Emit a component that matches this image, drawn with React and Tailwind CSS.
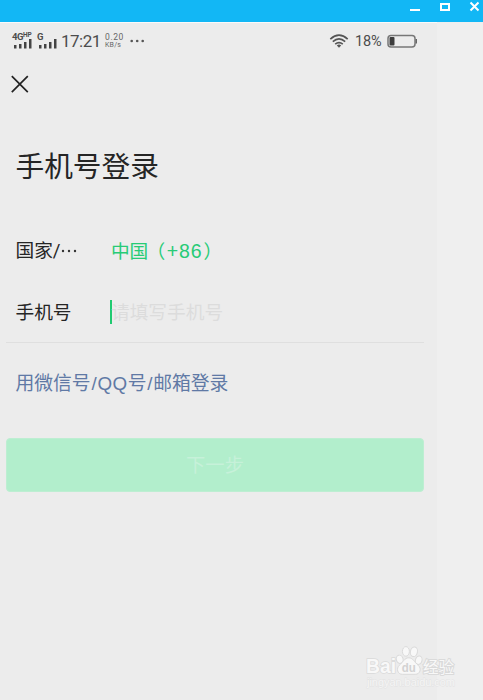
import React from "react";

function TitleBar() {
  return (
    <header className="h-[22px] shrink-0 bg-[#12b7f5] flex justify-end">
      <svg width="83" height="22" viewBox="400 0 83 22" fill="none" stroke="#fff">
        <path d="M410 10H420" strokeWidth="2" />
        <rect x="441" y="4" width="8" height="6" strokeWidth="2" />
        <path d="M470.5 2.5L478.5 10.5M478.5 2.5L470.5 10.5" strokeWidth="2" />
      </svg>
    </header>
  );
}

function Signal({ label, sup, className }) {
  return (
    <div className={`flex flex-col ${className}`}>
      <div className="flex h-[7px] items-start text-[9.5px] font-bold leading-[8px] tracking-[-0.5px] whitespace-nowrap">
        <span>{label}</span>
        {sup && <span className="text-[6.5px] leading-[5px] tracking-[-0.1px]">{sup}</span>}
      </div>
      <svg width="20" height="10" viewBox="0 0 20 10" fill="#444" className="-mt-px">
        <rect x="2" y="6" width="2.5" height="3.5" />
        <rect x="7" y="5" width="2.5" height="4.5" />
        <rect x="12" y="3" width="2.5" height="6.5" />
        <rect x="17" y="0" width="2.5" height="9.5" />
      </svg>
    </div>
  );
}

function StatusBar() {
  return (
    <div className="flex h-[36px] shrink-0 items-center pl-[12px] pr-[20px] text-[#4c4c4c]">
      <Signal label="4G" sup="HP" className="w-[25px]" />
      <Signal label="G" className="w-[24px]" />
      <span className="w-[44px] text-[17px] leading-[20px] tracking-[-0.5px]">17:21</span>
      <span className="flex w-[23px] flex-col text-[8.5px] text-[#666]">
        <span className="leading-[8px] tracking-[0.6px]">0.20</span>
        <span className="text-[7px] leading-[8px] tracking-[0.2px]">KB/s</span>
      </span>
      <svg width="17" height="6" viewBox="0 0 17 6" fill="#555" className="ml-px">
        <circle cx="2.7" cy="3" r="1.3" />
        <circle cx="8.2" cy="3" r="1.3" />
        <circle cx="13.7" cy="3" r="1.3" />
      </svg>
      <svg width="20" height="16" viewBox="329 32 20 16" fill="none" stroke="#555" strokeWidth="1.6" className="ml-auto">
        <path d="M330.3 38.1Q339 30.3 347.7 38.1M332.8 40.7Q339 35 345.2 40.7M335.2 43.2Q339 39.9 342.8 43.2" />
        <path d="M336.8 44.4Q339 42.7 341.2 44.4L339 46.7Z" fill="#555" stroke="none" />
      </svg>
      <span className="ml-[6px] w-[32px] pt-px text-[14.5px] leading-[20px] tracking-[-0.1px]">18%</span>
      <svg width="30" height="14" viewBox="387 33 30 14" fill="none" className="shrink-0">
        <rect x="388" y="34.5" width="27" height="11.5" rx="3" stroke="#777" strokeWidth="1.5" />
        <rect x="389.5" y="36" width="5" height="8.5" rx="1" fill="#3c3c3c" />
        <path d="M416.3 38V42.5" stroke="#666" strokeWidth="1.5" />
      </svg>
    </div>
  );
}

function Watermark() {
  return (
    <svg className="absolute left-[360px] top-[642px]" width="110" height="50" viewBox="360 642 110 50" fontFamily="'Liberation Sans','Noto Sans CJK SC',sans-serif">
      <g fill="#f8f8f8" stroke="#dadada" strokeWidth="1">
        <ellipse cx="399.7" cy="659.3" rx="3.4" ry="4.2" transform="rotate(-15 399.7 659.3)" />
        <ellipse cx="405.9" cy="651.4" rx="3.5" ry="4.8" />
        <ellipse cx="413.9" cy="651.8" rx="3.5" ry="4.8" transform="rotate(12 413.9 651.8)" />
        <ellipse cx="418.7" cy="660.2" rx="3.3" ry="4.3" transform="rotate(15 418.7 660.2)" />
        <path d="M408.8 657.8C413 657.8 414.2 662 418.2 665.3C422 668.4 420 674.5 415.3 674.3H402.5C397.4 674.5 396 668.4 399.3 665.3C403.3 662 404.4 657.8 408.8 657.8Z" />
        <text x="366" y="673" fontSize="19.5" textLength="30" lengthAdjust="spacingAndGlyphs" fontWeight="700" paintOrder="stroke" strokeWidth="1.5">Bai</text>
        <text x="423" y="672.5" fontSize="15.5" fontWeight="400" textLength="31" paintOrder="stroke" strokeWidth="2">经验</text>
      </g>
      <text x="401.8" y="672" fontSize="12.5" fontWeight="700" fill="#d2d2d2" textLength="14" lengthAdjust="spacingAndGlyphs">du</text>
      <text x="367" y="685.5" fontSize="11" fill="#f5f5f5" stroke="#e2e2e2" strokeWidth=".8" paintOrder="stroke" textLength="88">jingyan.baidu.com</text>
    </svg>
  );
}

export default function App() {
  return (
    <div className="relative flex h-[700px] w-[483px] flex-col overflow-hidden bg-[#efefef] font-['Liberation_Sans','Noto_Sans_CJK_SC',sans-serif]">
      <TitleBar />
      <main className="flex w-[437px] flex-1 flex-col border-t border-[#fafafa] bg-[#ececec] font-['Roboto','Noto_Sans_CJK_SC',sans-serif] text-[#252525]">
        <StatusBar />
        <button aria-label="关闭" className="ml-[11px] mt-[16px] h-[18px] w-[18px]">
          <svg width="18" height="18" viewBox="0 0 18 18" fill="none" stroke="#222" strokeWidth="1.7">
            <path d="M.8 1.2L16.8 17.2M16.8 1.2L.8 17.2" />
          </svg>
        </button>
        <h1 className="ml-[15.5px] mt-[54px] h-[40px] text-[28.7px] leading-[40px]">手机号登录</h1>
        <div className="mt-[49px] flex h-[30px] items-center pl-[15.5px] text-[18.7px] leading-[30px]">
          <span className="flex w-[95.5px] items-center">国家/<svg width="18" height="6" viewBox="0 0 18 6" fill="#333" className="-ml-px"><circle cx="3" cy="3" r="1.2" /><circle cx="9" cy="3" r="1.2" /><circle cx="15" cy="3" r="1.2" /></svg></span>
          <span className="whitespace-nowrap text-[#27cb76]"><span className="tracking-[-0.2px]">中国</span><span className="-ml-[1.5px] mr-[1.5px]">（</span><span className="font-['Liberation_Sans',sans-serif] text-[19.5px] tracking-[0.9px]">+86</span><span className="ml-[1px]">）</span></span>
        </div>
        <div className="ml-[6px] mt-[16px] flex h-[61px] w-[418px] items-center border-b border-[#dfdfdf] pl-[9.5px] text-[18.7px]">
          <span className="w-[94.5px] pt-[2px]">手机号</span>
          <span className="h-[24px] w-[2px] bg-[#20ca70]" />
          <span className="-ml-px pt-[2px] text-[#dcdcdc]">请填写手机号</span>
        </div>
        <a className="ml-[15.5px] mt-[26px] h-[29px] whitespace-nowrap font-['Liberation_Sans','Noto_Sans_CJK_SC',sans-serif] text-[18.8px] leading-[30px] text-[#6079a5]">用微信号<span className="mx-[0.8px]">/</span><span className="tracking-[0.5px]">QQ</span>号<span className="mx-[0.8px]">/</span>邮箱登录</a>
        <button className="ml-[6px] mt-[40px] h-[54px] w-[418px] rounded-[4px] border border-[#bdeed2] bg-[#b2eecc] pt-[2px] text-[19.3px] text-[#c6f1d9]">下一步</button>
      </main>
      <Watermark />
    </div>
  );
}
